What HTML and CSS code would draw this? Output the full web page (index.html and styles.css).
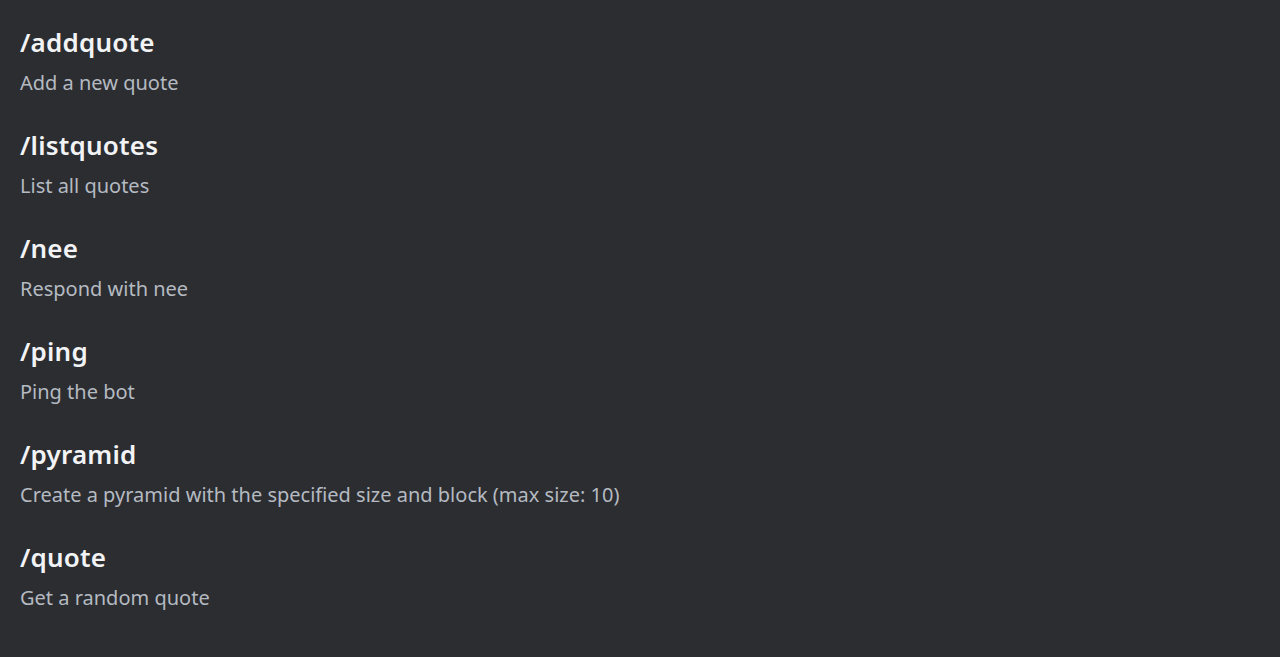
FILE: index.html
```html
<!DOCTYPE html>
<html>
<head>
<meta charset="utf-8">
<link rel="stylesheet" href="styles.css">
</head>
<body>
<div class="list">
  <div class="cmd"><div class="name">/addquote</div><div class="desc">Add a new quote</div></div>
  <div class="cmd"><div class="name">/listquotes</div><div class="desc">List all quotes</div></div>
  <div class="cmd"><div class="name">/nee</div><div class="desc">Respond with nee</div></div>
  <div class="cmd"><div class="name">/ping</div><div class="desc">Ping the bot</div></div>
  <div class="cmd"><div class="name">/pyramid</div><div class="desc">Create a pyramid with the specified size and block (max size: 10)</div></div>
  <div class="cmd"><div class="name">/quote</div><div class="desc">Get a random quote</div></div>
</div>
</body>
</html>
```
FILE: styles.css
```css
html, body {
  margin: 0;
  height: 100%;
  background: #2b2d31;
}
body {
  font-family: "Noto Sans", "Open Sans", sans-serif;
}
.list {
  display: flex;
  flex-direction: column;
  gap: 34px;
  padding: 26px 20px 0 20px;
}
.cmd {
  display: flex;
  flex-direction: column;
  gap: 12px;
}
.name {
  color: #f2f3f5;
  font-size: 26px;
  line-height: 32px;
  font-weight: 600;
  letter-spacing: 0.2px;
}
.desc {
  color: #b5bac1;
  font-size: 20px;
  line-height: 25px;
}
```
